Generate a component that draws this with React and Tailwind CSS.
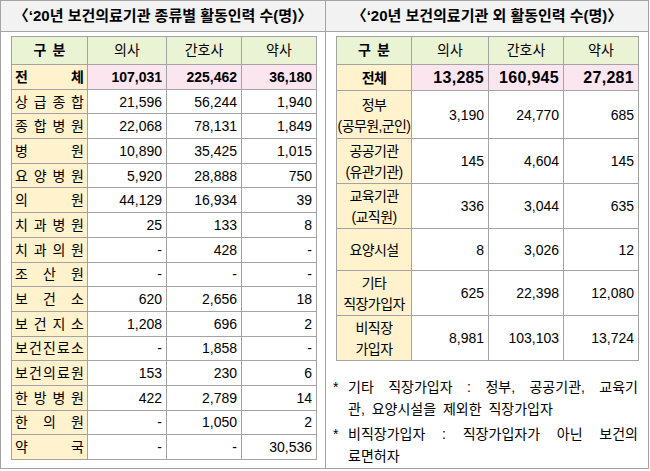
import React from "react";

const leftRows = [
  ["전체", "107,031", "225,462", "36,180", true],
  ["상급종합", "21,596", "56,244", "1,940"],
  ["종합병원", "22,068", "78,131", "1,849"],
  ["병원", "10,890", "35,425", "1,015"],
  ["요양병원", "5,920", "28,888", "750"],
  ["의원", "44,129", "16,934", "39"],
  ["치과병원", "25", "133", "8"],
  ["치과의원", "-", "428", "-"],
  ["조산원", "-", "-", "-"],
  ["보건소", "620", "2,656", "18"],
  ["보건지소", "1,208", "696", "2"],
  ["보건진료소", "-", "1,858", "-"],
  ["보건의료원", "153", "230", "6"],
  ["한방병원", "422", "2,789", "14"],
  ["한의원", "-", "1,050", "2"],
  ["약국", "-", "-", "30,536"],
];

const rightRows = [
  [["전체"], "13,285", "160,945", "27,281", true, "h-[26px]"],
  [["정부", "(공무원,군인)"], "3,190", "24,770", "685", false, "h-[48px]"],
  [["공공기관", "(유관기관)"], "145", "4,604", "145", false, "h-[44px]"],
  [["교육기관", "(교직원)"], "336", "3,044", "635", false, "h-[42px]"],
  [["요양시설"], "8", "3,026", "12", false, "h-[42px]"],
  [["기타", "직장가입자"], "625", "22,398", "12,080", false, "h-[45px]"],
  [["비직장", "가입자"], "8,981", "103,103", "13,724", false, "h-[44px]"],
];

const B = "border border-[#a3a3a3]";

function Title({ children }) {
  return (
    <div className="h-[31px] border-b border-[#a3a3a3] bg-[#f2f2f2] flex items-center justify-center text-[15px] font-bold text-black">
      {children}
    </div>
  );
}

function Header() {
  return (
    <tr className="h-[28px] bg-[#ebf3d5]">
      <td className={`${B} text-center text-[14px] font-semibold tracking-[6px] pl-[6px]`}>구분</td>
      <td className={`${B} text-center text-[14px]`}>의사</td>
      <td className={`${B} text-center text-[14px]`}>간호사</td>
      <td className={`${B} text-center text-[14px]`}>약사</td>
    </tr>
  );
}

export default function App() {
  return (
    <div className="w-[650px] h-[471px] bg-white font-['Liberation_Sans','Noto_Sans_CJK_KR',sans-serif] text-black">
      <div className="w-[649px] h-[469px] border border-[#a3a3a3] grid grid-cols-[325px_1fr]">
        {/* Left panel */}
        <div className="border-r border-[#a3a3a3]">
          <Title>〈‘20년 보건의료기관 종류별 활동인력 수(명)〉</Title>
          <table className="ml-[10px] mt-[4px] w-[305px] table-fixed border-collapse">
            <colgroup>
              <col className="w-[76px]" />
              <col className="w-[79px]" />
              <col className="w-[75px]" />
              <col className="w-[75px]" />
            </colgroup>
            <tbody>
              <Header />
              {leftRows.map(([label, a, b, c, bold]) => (
                <tr key={label} className="h-[24.7px]">
                  <td className={`${B} bg-[#fff2cc] px-[3px] py-0 text-[14px] leading-none`}>
                    <div className={`flex justify-between ${bold ? "font-bold" : ""}`}>
                      {label.split("").map((ch, i) => (
                        <span key={i}>{ch}</span>
                      ))}
                    </div>
                  </td>
                  {[a, b, c].map((v, i) => (
                    <td
                      key={i}
                      className={`${B} text-right pr-[4px] leading-none ${
                        bold ? "bg-[#fbe5ef] font-bold text-[14px]" : "text-[14px]"
                      }`}
                    >
                      {v}
                    </td>
                  ))}
                </tr>
              ))}
            </tbody>
          </table>
        </div>

        {/* Right panel */}
        <div>
          <Title>〈‘20년 보건의료기관 외 활동인력 수(명)〉</Title>
          <table className="ml-[10px] mt-[4px] w-[302px] table-fixed border-collapse">
            <colgroup>
              <col className="w-[75px]" />
              <col className="w-[77px]" />
              <col className="w-[75px]" />
              <col className="w-[75px]" />
            </colgroup>
            <tbody>
              <Header />
              {rightRows.map(([lines, a, b, c, bold, h]) => (
                <tr key={lines[0]} className={h}>
                  <td
                    className={`${B} bg-[#fff2cc] text-center text-[14px] leading-[21px] tracking-[-0.6px] whitespace-nowrap pt-[2px] ${
                      bold ? "font-bold" : ""
                    }`}
                  >
                    {lines.map((l) => (
                      <div key={l}>{l}</div>
                    ))}
                  </td>
                  {[a, b, c].map((v, i) => (
                    <td
                      key={i}
                      className={`${B} text-right pr-[4px] leading-none ${
                        bold ? "bg-[#fbe5ef] font-bold text-[16px] tracking-[0.3px]" : "text-[14px]"
                      }`}
                    >
                      {v}
                    </td>
                  ))}
                </tr>
              ))}
            </tbody>
          </table>

          <div className="mt-[15px] pl-[7px] pr-[10px] text-[14px] leading-[22px]">
            <div className="flex">
              <span className="w-[15px] shrink-0">*</span>
              <div className="flex-1">
                <div className="text-justify [text-align-last:justify]">
                  기타 직장가입자 : 정부, 공공기관, 교육기
                </div>
                <div className="[word-spacing:3px]">관, 요양시설을 제외한 직장가입자</div>
              </div>
            </div>
            <div className="flex mt-[3px]">
              <span className="w-[15px] shrink-0">*</span>
              <div className="flex-1">
                <div className="text-justify [text-align-last:justify]">
                  비직장가입자 : 직장가입자가 아닌 보건의
                </div>
                <div>료면허자</div>
              </div>
            </div>
          </div>
        </div>
      </div>
    </div>
  );
}
